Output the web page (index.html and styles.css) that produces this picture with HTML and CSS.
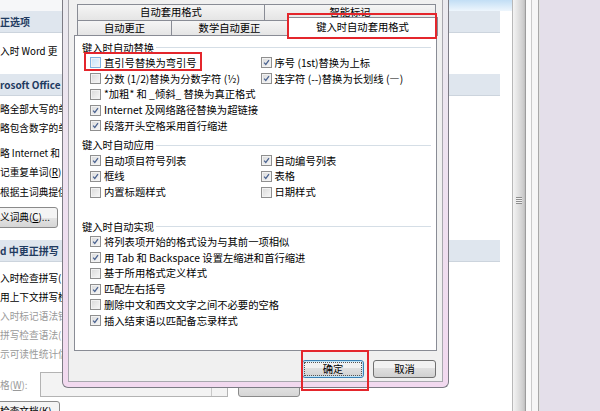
FILE: index.html
```html
<!DOCTYPE html>
<html lang="zh-CN">
  <head>
    <meta charset="UTF-8" />
    <title>自动更正</title>
    <link rel="stylesheet" href="styles.css">
  </head>
  <body>
    <div class="screen">
      <div class="word">
        <div class="word-body">
          <div class="word-top"></div>
          <div class="sec-head">正选项</div>
          <div class="opt opt-first">入时 Word 更</div>
          <div class="sec-head sec-office">rosoft Office</div>
          <div class="opt opt-after-head">略全部大写的单</div>
          <div class="opt">略包含数字的单</div>
          <div class="opt opt-gap">略 Internet 和</div>
          <div class="opt">记重复单词(<u>R</u>)</div>
          <div class="opt opt-last">根据主词典提供</div>
          <div class="w-btn w-btn-dict">义词典(<u>C</u>)...</div>
          <div class="sec-head sec-word">d 中更正拼写</div>
          <div class="opt opt-after-head2">入时检查拼写(</div>
          <div class="opt">用上下文拼写检</div>
          <div class="opt off">入时标记语法错</div>
          <div class="opt off">拼写检查语法(</div>
          <div class="opt off">示可读性统计信</div>
          <div class="combo-row">
            <span class="off">格(<u>W</u>):</span>
            <div class="combo"><span class="combo-drop"></span></div>
            <div class="w-btn w-btn-set"></div>
          </div>
          <div class="w-btn w-btn-check">检查文档(<u>K</u>)</div>
        </div>
        <div class="scroll"><span class="grip"></span></div>
        <div class="edge"></div>
      </div>
      <div class="desk"></div>

      <div class="dialog">
        <div class="client">
          <div class="tab-row tab-row-back">
            <div class="tab tab-format">自动套用格式</div>
            <div class="tab tab-smart">智能标记</div>
          </div>
          <div class="tab-row tab-row-front">
            <div class="tab tab-auto">自动更正</div>
            <div class="tab tab-math">数学自动更正</div>
            <div class="tab tab-active">键入时自动套用格式</div>
          </div>

          <div class="tab-page">
            <div class="group-title"><span>键入时自动替换</span><i></i></div>
            <div class="cols">
              <div class="col">
                <div class="chk"><span class="box hot"></span>直引号替换为弯引号</div>
                <div class="chk"><span class="box"></span>分数 (1/2)替换为分数字符 (½)</div>
                <div class="chk"><span class="box"></span>*加粗* 和 _倾斜_ 替换为真正格式</div>
                <div class="chk"><span class="box on"><svg viewBox="0 0 9 9"><path d="M1.4 4.6 L3.6 7 L7.7 1.5" /></svg></span>Internet 及网络路径替换为超链接</div>
                <div class="chk"><span class="box on"><svg viewBox="0 0 9 9"><path d="M1.4 4.6 L3.6 7 L7.7 1.5" /></svg></span>段落开头空格采用首行缩进</div>
              </div>
              <div class="col">
                <div class="chk"><span class="box on"><svg viewBox="0 0 9 9"><path d="M1.4 4.6 L3.6 7 L7.7 1.5" /></svg></span>序号 (1st)替换为上标</div>
                <div class="chk"><span class="box on"><svg viewBox="0 0 9 9"><path d="M1.4 4.6 L3.6 7 L7.7 1.5" /></svg></span>连字符 (--)替换为长划线 (—)</div>
              </div>
            </div>

            <div class="group-title group-apply"><span>键入时自动应用</span><i></i></div>
            <div class="cols">
              <div class="col">
                <div class="chk"><span class="box on"><svg viewBox="0 0 9 9"><path d="M1.4 4.6 L3.6 7 L7.7 1.5" /></svg></span>自动项目符号列表</div>
                <div class="chk"><span class="box on"><svg viewBox="0 0 9 9"><path d="M1.4 4.6 L3.6 7 L7.7 1.5" /></svg></span>框线</div>
                <div class="chk"><span class="box"></span>内置标题样式</div>
              </div>
              <div class="col">
                <div class="chk"><span class="box on"><svg viewBox="0 0 9 9"><path d="M1.4 4.6 L3.6 7 L7.7 1.5" /></svg></span>自动编号列表</div>
                <div class="chk"><span class="box on"><svg viewBox="0 0 9 9"><path d="M1.4 4.6 L3.6 7 L7.7 1.5" /></svg></span>表格</div>
                <div class="chk"><span class="box"></span>日期样式</div>
              </div>
            </div>

            <div class="group-title group-do"><span>键入时自动实现</span><i></i></div>
            <div class="col">
              <div class="chk"><span class="box on"><svg viewBox="0 0 9 9"><path d="M1.4 4.6 L3.6 7 L7.7 1.5" /></svg></span>将列表项开始的格式设为与其前一项相似</div>
              <div class="chk"><span class="box on"><svg viewBox="0 0 9 9"><path d="M1.4 4.6 L3.6 7 L7.7 1.5" /></svg></span>用 Tab 和 Backspace 设置左缩进和首行缩进</div>
              <div class="chk"><span class="box"></span>基于所用格式定义样式</div>
              <div class="chk"><span class="box on"><svg viewBox="0 0 9 9"><path d="M1.4 4.6 L3.6 7 L7.7 1.5" /></svg></span>匹配左右括号</div>
              <div class="chk"><span class="box"></span>删除中文和西文文字之间不必要的空格</div>
              <div class="chk"><span class="box on"><svg viewBox="0 0 9 9"><path d="M1.4 4.6 L3.6 7 L7.7 1.5" /></svg></span>插入结束语以匹配备忘录样式</div>
            </div>
          </div>

          <div class="buttons">
            <div class="btn btn-default"><span>确定</span></div>
            <div class="btn btn-cancel"><span>取消</span></div>
          </div>
        </div>
      </div>

      <div class="mark mark-tab"></div>
      <div class="mark mark-item"></div>
      <div class="mark mark-ok"></div>
    </div>
  </body>
</html>
```

FILE: styles.css
```css
* {
  box-sizing: border-box;
}

body {
  margin: 0;
  font-family: "Noto Sans CJK SC", "Liberation Sans", sans-serif;
  color: #000;
}

.screen {
  position: relative;
  display: flex;
  width: 600px;
  height: 411px;
  overflow: hidden;
  background: #e4dfea;
}

/* Word options window behind the dialog */
.word {
  display: flex;
  width: 540px;
  height: 100%;
}

.word-body {
  width: 512px;
  background: #fff;
  overflow: hidden;
  font-size: 9.7px;
  white-space: nowrap;
}

.word-top {
  height: 11px;
  background: linear-gradient(90deg, #f6f7f9 0 62px, transparent 62px),
    linear-gradient(#c2def5, #eef6fd);
}

.sec-head {
  width: 500px;
  height: 22px;
  line-height: 22px;
  background: #dfe6ee;
  border-bottom: 1px solid #ccd4dd;
  font-size: 10px;
  font-weight: bold;
  color: #1f3b61;
}

.sec-office {
  margin-top: 13px;
}

.sec-word {
  margin-top: 12px;
}

.opt {
  height: 19px;
  line-height: 19px;
}

.opt-first {
  margin-top: 9px;
}

.opt-after-head {
  margin-top: 4px;
}

.opt-gap {
  margin-top: 6px;
}

.opt-last {
  margin-top: 1px;
}

.opt-after-head2 {
  margin-top: 7px;
}

.off {
  color: #9a9a9a;
}

.w-btn {
  height: 21px;
  line-height: 19px;
  border: 1px solid #8a8a8a;
  border-radius: 3px;
  background: linear-gradient(#f4f4f4 0 50%, #e4e4e4 50%, #d6d6d6);
}

.w-btn-dict {
  width: 66px;
  margin-top: 5px;
  margin-left: -8px;
  padding-left: 7px;
}

.combo-row {
  display: flex;
  align-items: center;
  height: 25px;
  margin-top: 8px;
}

.combo-row > span {
  width: 40px;
}

.combo {
  display: flex;
  justify-content: flex-end;
  width: 188px;
  height: 25px;
  border: 1px solid #b3b3b3;
  background: #f3f3f3;
}

.combo-drop {
  width: 16px;
  border-left: 1px solid #c8c8c8;
}

.w-btn-set {
  width: 62px;
  height: 24px;
  margin-left: 10px;
}

.w-btn-check {
  width: 66px;
  margin-top: 4px;
  margin-left: -6px;
  padding-left: 5px;
}

.scroll {
  display: flex;
  align-items: center;
  justify-content: center;
  width: 14px;
  padding-bottom: 10px;
  background: linear-gradient(90deg, #f4f4f4, #e3e3e3 40%, #cdcdcd 85%, #bdbdbd);
  border-left: 1px solid #b8b8b8;
  border-right: 1px solid #9c9c9c;
}

.grip {
  width: 6px;
  height: 7px;
  background: repeating-linear-gradient(#8d8d8d 0 1px, #f2f2f2 1px 2px);
}

.edge {
  width: 14px;
  background: linear-gradient(90deg, #fafafa 0 5px, #cacaca 5px 6px, #f6f6f6 6px 12px, #a8a8a8 12px 13px, #e2e2e2 13px);
}

.desk {
  flex: 1;
}

/* AutoCorrect dialog */
.dialog {
  position: absolute;
  left: 62px;
  top: 0;
  width: 387px;
  height: 388px;
  padding: 0 5px 5px;
  border: 1px solid #7c7b84;
  border-top: 0;
  border-radius: 0 0 6px 6px;
  background: linear-gradient(#ebeaef, #eee1f0 45%, #f2d9ef);
  font-size: 10.3px;
}

.client {
  display: flex;
  flex-direction: column;
  height: 100%;
  padding: 4px 5px 0;
  background: #f0f0f0;
  border: 1px solid #a8a7ae;
  border-top: 0;
}

.tab-row {
  display: flex;
  align-items: flex-start;
  padding-left: 3px;
  white-space: nowrap;
}

.tab-row-back {
  height: 16px;
}

.tab-row-front {
  height: 15px;
}

.tab {
  flex: none;
  height: 100%;
  line-height: 14px;
  text-align: center;
  border: 1px solid #898c95;
  border-bottom: 0;
  background: linear-gradient(#f5f5f5, #e5e5e5);
}

.tab + .tab {
  margin-left: -1px;
}

.tab-format {
  width: 188px;
}

.tab-smart {
  width: 172px;
}

.tab-auto {
  width: 95px;
}

.tab-math {
  width: 117px;
}

.tab-active {
  position: relative;
  z-index: 2;
  width: 151px;
  height: 19px;
  margin-top: -3px;
  margin-left: -2px;
  line-height: 17px;
  background: #fff;
}

.tab-page {
  flex: 0 0 316px;
  padding: 4px 5px 0 7px;
  background: #fff;
  border: 1px solid #898c95;
  white-space: nowrap;
}

.group-title {
  display: flex;
  align-items: center;
  gap: 2px;
  height: 15px;
  line-height: 14px;
}

.group-title i {
  flex: 1;
  height: 1px;
  background: #d5dee6;
}

.group-apply {
  margin-top: 4px;
}

.group-do {
  margin-top: 19px;
}

.cols {
  display: flex;
}

.col {
  width: 189px;
  margin-left: 8px;
}

.cols .col + .col {
  margin-left: 0;
}

.chk {
  display: flex;
  align-items: center;
  height: 15.75px;
  line-height: 14px;
}

.box {
  flex: none;
  width: 11px;
  height: 11px;
  margin-right: 3px;
  padding: 1px;
  border: 1px solid #8f8f8f;
  background: linear-gradient(135deg, #d9d9d9, #f8f8f8);
  box-shadow: inset 0 0 0 1px #f2f2f2;
}

.box svg {
  display: block;
  width: 7px;
  height: 7px;
}

.box path {
  fill: none;
  stroke: #4b6390;
  stroke-width: 1.6;
}

.box.hot {
  border-color: #7fb2df;
  background: linear-gradient(135deg, #c6e2f7, #eef7fd);
}

.buttons {
  display: flex;
  justify-content: flex-end;
  gap: 9px;
  margin-top: 9px;
  padding-right: 1px;
}

.btn {
  height: 18px;
  line-height: 16px;
  text-align: center;
  border: 1px solid #707070;
  border-radius: 3px;
  background: linear-gradient(#f2f2f2 0 45%, #e0e0e0 45%, #d0d0d0);
}

.btn-default {
  width: 62px;
  padding: 2px;
  line-height: 12px;
  border-color: #3c7fb1;
  box-shadow: inset 0 0 0 1px #bfe4f7;
}

.btn-default span {
  display: block;
  height: 100%;
  outline: 1px dotted #555;
}

.btn-cancel {
  width: 63px;
}

/* red annotation boxes */
.mark {
  position: absolute;
  z-index: 5;
  border: 2px solid #e4262c;
}

.mark-tab {
  left: 287px;
  top: 13px;
  width: 150px;
  height: 26px;
}

.mark-item {
  left: 84px;
  top: 52px;
  width: 118px;
  height: 19px;
}

.mark-ok {
  left: 301px;
  top: 350px;
  width: 68px;
  height: 41px;
}
```
